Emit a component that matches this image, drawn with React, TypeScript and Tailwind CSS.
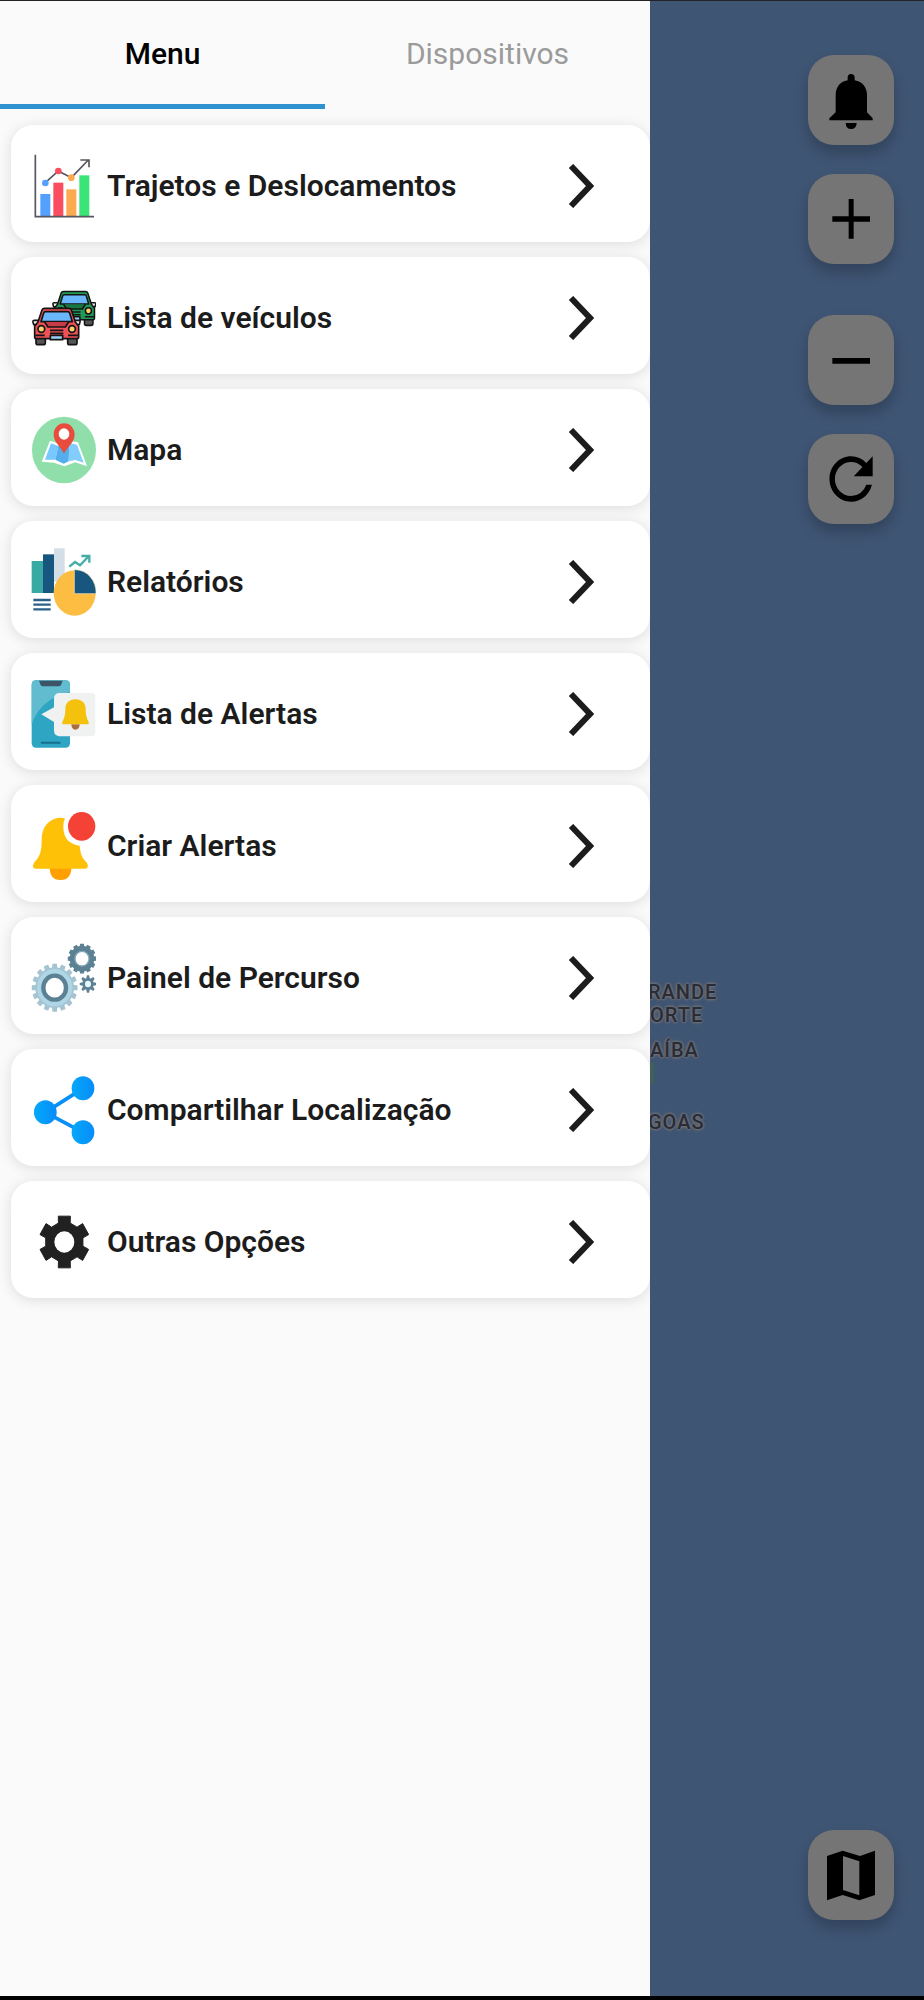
import { useState } from 'react';
import type { ReactNode } from 'react';

// Builds the outline of a cog with n trapezoid teeth
function cog(cx: number, cy: number, outer: number, inner: number, n: number, top = 0.26, base = 0.34) {
  const step = (Math.PI * 2) / n;
  const points: string[] = [];
  for (let i = 0; i < n; i++) {
    const mid = i * step - Math.PI / 2;
    const corners = [
      [inner, -base],
      [outer, -top],
      [outer, top],
      [inner, base],
    ];
    for (const [r, offset] of corners) {
      const a = mid + offset * step;
      points.push(`${(cx + r * Math.cos(a)).toFixed(1)},${(cy + r * 1.05 * Math.sin(a)).toFixed(1)}`);
    }
  }
  return points.join(' ');
}

const ICON = 'h-[70px] w-[65px] shrink-0';

const ChartIcon = () => (
  <svg className={ICON} viewBox="63 59 195 210" aria-hidden="true">
    <rect x="91" y="188" width="30" height="66" fill="#54a0ff" />
    <rect x="130" y="154" width="30" height="100" fill="#fc4c5f" />
    <rect x="169" y="174" width="30" height="80" fill="#fda94f" />
    <rect x="208" y="132" width="30" height="122" fill="#3be477" />
    <path d="M76 70V256H252" fill="none" stroke="#57555f" strokeWidth="5" />
    <path d="M106 154L145 119L184 139L235 86M211 86H237V108" fill="none" stroke="#57555f" strokeWidth="5" />
    <circle cx="106" cy="155" r="10" fill="#54a0ff" />
    <circle cx="145" cy="119" r="10" fill="#fc4c5f" />
    <circle cx="184" cy="139" r="10" fill="#fda94f" />
  </svg>
);

function Car({ body, hood }: { body: string; hood: string }) {
  return (
    <g stroke="#141414" strokeWidth="5" strokeLinejoin="round">
      <path d="M78 618H106V635Q106 641 100 641H84Q78 641 78 635ZM173 618H201V635Q201 641 195 641H179Q173 641 173 635Z" fill="#555" />
      <path d="M84 568H73Q68 568 69 573L71 581H82M195 568H206Q211 568 210 573L208 581H197" fill="#eee" />
      <path d="M96 537Q98 532 104 532H176Q182 532 184 537L196 573L206 586V618Q206 623 201 623H79Q74 623 74 618V586L84 573Z" fill={body} />
      <path d="M101 546Q102 542 107 542H173Q178 542 179 546L187 572H93Z" fill="#6ab7fb" />
      <path d="M104 573L114 588H166L176 573M120 598H160M120 607H160" fill={hood} />
      <circle cx="94" cy="594" r="10" fill="#ffd06b" />
      <circle cx="186" cy="594" r="10" fill="#ffd06b" />
      <rect x="121" y="613" width="37" height="13" fill="#9bd0f8" />
      <path d="M76 613H104M174 613H204" />
    </g>
  );
}

const CarsIcon = () => (
  <svg className={ICON} viewBox="63 456 195 210" aria-hidden="true">
    <g transform="translate(66 -13) scale(0.91 0.93)">
      <Car body="#239957" hood="#187641" />
    </g>
    <Car body="#ef5157" hood="#c63b45" />
  </svg>
);

const MapPinIcon = () => (
  <svg className={ICON} viewBox="63 73 195 210" aria-hidden="true">
    <ellipse cx="162" cy="178" rx="96" ry="100" fill="#90dfaa" />
    <path d="M120 150L146 159L176 150L204 155L231 227L196 215L163 227L132 216L95 213Z" fill="#fff" />
    <path d="M123 158L145 166L136 207L105 207Z" fill="#78c8fd" />
    <path d="M145 166L178 157L176 212L161 219L136 207Z" fill="#53aeee" />
    <path d="M178 157L201 162L221 216L196 208L176 212Z" fill="#83cdfc" />
    <path d="M162 190C153 168 131 157 131 131A31 33 0 0 1 194 131C194 157 172 168 162 190Z" fill="#e94b3c" />
    <ellipse cx="162" cy="130" rx="16" ry="17" fill="#fff" />
  </svg>
);

const ReportIcon = () => (
  <svg className={ICON} viewBox="63 469 195 210" aria-hidden="true">
    <rect x="132" y="473" width="32" height="100" fill="#d3dee7" />
    <rect x="65" y="511" width="34" height="96" fill="#38a9a3" />
    <rect x="99" y="491" width="33" height="116" fill="#17577f" />
    <path d="M70 628H122M70 642H122M70 656H122" stroke="#2b608b" strokeWidth="7" />
    <ellipse cx="194" cy="607" rx="63" ry="68" fill="#fdbc42" />
    <path d="M193 609V537H196A63 68 0 0 1 258 609Z" fill="#17577f" stroke="#fde7b8" strokeWidth="2" />
    <path d="M178 528L195 514L210 524L237 496M214 496H238V516" fill="none" stroke="#45ada6" strokeWidth="7" />
  </svg>
);

const PhoneAlertIcon = () => (
  <svg className={ICON} viewBox="63 58 195 210" aria-hidden="true">
    <rect x="65" y="62" width="115" height="202" rx="13" fill="#2fa5c4" />
    <path d="M65 195V75Q65 62 78 62H167Q180 62 180 75V98C132 105 84 138 65 195Z" fill="#62bcd0" />
    <path d="M87 63H158L153 76Q151 80 146 80H99Q94 80 92 76Z" fill="#3b5468" />
    <path d="M95 249H149" stroke="#176f8e" strokeWidth="6" strokeLinecap="round" />
    <path d="M147 100H244Q256 100 256 112V218Q256 230 244 230H147Q132 228 132 212V187L94 164L132 143V116Q132 102 147 100Z" fill="#f0f2f2" />
    <path d="M184 194H209Q208 210 196 210Q185 210 184 194Z" fill="#a96d3e" />
    <path d="M196 119C217 120 227 131 227 148C227 169 231 176 236 187Q238 194 231 194H162Q155 194 157 187C162 176 166 169 166 148C166 131 176 120 196 119Z" fill="#f4c20d" />
  </svg>
);

const BellAlertIcon = () => (
  <svg className={ICON} viewBox="63 453 195 210" aria-hidden="true">
    <path d="M119 622H184Q184 660 151 660Q119 660 119 622Z" fill="#ff9f00" />
    <path d="M151 473C116 475 95 501 95 538C95 579 89 590 73 607Q63 625 77 626H226Q238 624 231 608C215 594 211 578 209 557C175 552 160 532 160 500Q160 484 165 475Q157 473 151 473Z" fill="#ffc107" />
    <ellipse cx="215" cy="499" rx="41" ry="43" fill="#f44336" />
  </svg>
);

const GearsIcon = () => (
  <svg className={ICON} viewBox="63 71 195 210" aria-hidden="true">
    <polygon points={cog(134, 205, 69, 58, 16)} fill="#a5c4d2" />
    <ellipse cx="134" cy="205" rx="53" ry="56" fill="#afd6e7" />
    <ellipse cx="134" cy="205" rx="34" ry="36" fill="#fff" stroke="#5b8193" strokeWidth="13" />
    <polygon points={cog(216, 118, 43, 37, 12)} fill="#5b8193" />
    <ellipse cx="216" cy="118" rx="21" ry="22" fill="#fff" stroke="#85a9b8" strokeWidth="4" />
    <polygon points={cog(234, 194, 25, 17, 8, 0.16, 0.4)} fill="#5b8193" />
    <ellipse cx="234" cy="194" rx="9" ry="10" fill="#e7f7ff" />
  </svg>
);

const ShareIcon = () => (
  <svg className={ICON} viewBox="63 466 195 210" aria-hidden="true">
    <defs>
      <linearGradient id="share" x1="0" x2="1">
        <stop offset="0" stopColor="#04a9f8" />
        <stop offset="1" stopColor="#078cfa" />
      </linearGradient>
    </defs>
    <path d="M219 506L106 578L219 638" fill="none" stroke="#098ff8" strokeWidth="11" />
    <ellipse cx="219" cy="506" rx="34" ry="36" fill="url(#share)" />
    <ellipse cx="106" cy="578" rx="34" ry="36" fill="url(#share)" />
    <ellipse cx="219" cy="638" rx="34" ry="36" fill="url(#share)" />
  </svg>
);

const SettingsIcon = () => (
  <svg className={ICON} viewBox="63 115 195 210" aria-hidden="true">
    <polygon points={cog(163, 220, 76, 57, 6, 0.23, 0.3)} fill="#212121" stroke="#212121" strokeWidth="3" strokeLinejoin="round" />
    <ellipse cx="163" cy="220" rx="30" ry="32" fill="#fff" />
  </svg>
);

const menuItems: { label: string; icon: ReactNode }[] = [
  { label: 'Trajetos e Deslocamentos', icon: <ChartIcon /> },
  { label: 'Lista de veículos', icon: <CarsIcon /> },
  { label: 'Mapa', icon: <MapPinIcon /> },
  { label: 'Relatórios', icon: <ReportIcon /> },
  { label: 'Lista de Alertas', icon: <PhoneAlertIcon /> },
  { label: 'Criar Alertas', icon: <BellAlertIcon /> },
  { label: 'Painel de Percurso', icon: <GearsIcon /> },
  { label: 'Compartilhar Localização', icon: <ShareIcon /> },
  { label: 'Outras Opções', icon: <SettingsIcon /> },
];

const tabs = ['Menu', 'Dispositivos'];

function MapButton({ label, children }: { label: string; children: ReactNode }) {
  return (
    <button
      type="button"
      aria-label={label}
      className="h-[90px] w-[86px] shrink-0 rounded-[26px] bg-[#757575] shadow-[0_8px_14px_rgba(0,0,0,0.22)]"
    >
      <svg className="h-full w-full" viewBox="0 0 258 270" aria-hidden="true">
        {children}
      </svg>
    </button>
  );
}

// Place names on the map carry a grey halo
const PLACE =
  'absolute text-[20px] leading-6 font-medium tracking-wider text-[#292c36] [text-shadow:0_0_2px_#6d6f75,0_0_2px_#6d6f75,0_0_3px_#6d6f75,0_0_3px_#6d6f75,0_0_4px_#6d6f75]';

export default function App() {
  const [activeTab, setActiveTab] = useState('Menu');

  return (
    <div className="flex min-h-screen border-t border-b-4 border-t-[#222] border-b-black bg-[#3f5574] font-['Roboto',sans-serif]">
      <aside className="w-[650px] max-w-[70.4%] shrink-0 bg-[#fafafa]">
        <div role="tablist" className="grid h-[108px] grid-cols-2">
          {tabs.map((tab) => (
            <button
              key={tab}
              type="button"
              role="tab"
              aria-selected={activeTab === tab}
              onClick={() => setActiveTab(tab)}
              className={
                activeTab === tab
                  ? 'border-b-[5px] border-[#2f92d0] pt-0.5 text-[30px] font-medium text-black'
                  : 'border-b-[5px] border-transparent pt-0.5 text-[30px] text-[#9b9b9b]'
              }
            >
              {tab}
            </button>
          ))}
        </div>

        <nav className="flex flex-col gap-[15px] overflow-hidden pt-4 pb-4 pl-[11px]">
          {menuItems.map((item) => (
            <button
              key={item.label}
              type="button"
              className="flex h-[117px] items-center gap-[11px] rounded-[22px] bg-white pt-1 pr-14 pl-5 text-left shadow-[0_2px_14px_rgba(0,0,0,0.12)]"
            >
              {item.icon}
              <span className="flex-1 text-[30px] font-semibold whitespace-nowrap text-[#1c1c1c]">{item.label}</span>
              <svg className="h-11 w-[26px] shrink-0" viewBox="0 0 26 44" fill="none" aria-hidden="true">
                <path d="M3 2L22 22L3 42" stroke="#1c1c1c" strokeWidth="6" />
              </svg>
            </button>
          ))}
        </nav>
      </aside>

      <main className="relative flex flex-1 flex-col items-end overflow-hidden pt-[54px] pr-[30px] pb-[76px]">
        <span className="absolute top-[1060px] left-0 h-6 w-1 rounded-r bg-[#40605a]" />
        <span className={`${PLACE} top-[979px] -left-0.5`}>RANDE</span>
        <span className={`${PLACE} top-[1002px] left-0`}>ORTE</span>
        <span className={`${PLACE} top-[1037px] left-0`}>AÍBA</span>
        <span className={`${PLACE} top-[1109px] -left-0.5`}>GOAS</span>

        <div className="flex flex-1 flex-col gap-[51px]">
          <div className="flex flex-col gap-[29px]">
            <MapButton label="Notificações">
              <path d="M119 68Q119 57 129 57Q140 57 140 68V76C164 80 177 98 177 120V172L194 190V196H64V190L83 172V120C83 98 95 80 119 76Z" />
              <path d="M113 204H146Q145 222 129 222Q114 222 113 204Z" />
            </MapButton>
            <MapButton label="Aumentar zoom">
              <path d="M73 127H122V75H137V127H186V143H137V194H122V143H73Z" />
            </MapButton>
          </div>
          <div className="flex flex-col gap-[29px]">
            <MapButton label="Diminuir zoom">
              <path d="M73 129H186V146H73Z" />
            </MapButton>
            <MapButton label="Atualizar">
              <path
                transform="translate(32 33) scale(8.1 8.5)"
                d="M17.65 6.35A7.958 7.958 0 0 0 12 4c-4.42 0-7.99 3.58-7.99 8s3.57 8 7.99 8c3.73 0 6.84-2.55 7.73-6h-2.08A5.99 5.99 0 0 1 12 18c-3.31 0-6-2.69-6-6s2.69-6 6-6c1.66 0 3.14.69 4.22 1.78L13 11h7V4l-2.35 2.35z"
              />
            </MapButton>
          </div>
        </div>

        <MapButton label="Tipo de mapa">
          <path fillRule="evenodd" d="M57 78L104 62L156 78L201 62V195L154 211L104 195L57 211ZM105 78V180L154 196V94Z" />
        </MapButton>
      </main>
    </div>
  );
}
